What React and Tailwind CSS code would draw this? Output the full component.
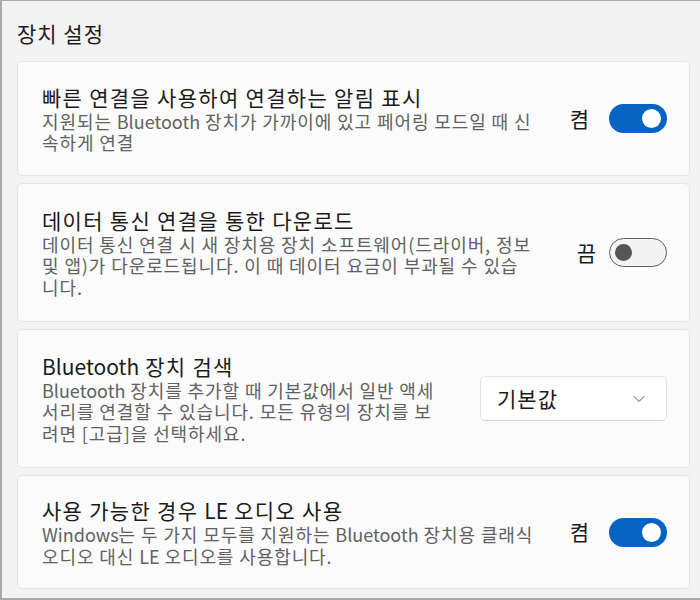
import { ChevronDown } from "lucide-react";

const font = { fontFamily: '"Noto Sans CJK KR", "Noto Sans", sans-serif' };

// Hangul in the reference runs wider than Latin, so only the Latin runs drop the tracking
const Spaced = ({ text }) =>
  text.split(/([A-Za-z]+)/).map((part, i) =>
    /^[A-Za-z]+$/.test(part) ? (
      <span key={i} className="tracking-normal">
        {part}
      </span>
    ) : (
      part
    )
  );

const Toggle = ({ on }) =>
  on ? (
    <div className="w-[58px] h-[29px] rounded-full bg-[#0563c1] flex items-center justify-end pr-[6px]">
      <div className="w-[19px] h-[19px] rounded-full bg-white" />
    </div>
  ) : (
    <div className="w-[58px] h-[29px] rounded-full border-[1.5px] border-[#5e5e5e] bg-[#f4f4f4] flex items-center pl-[5px]">
      <div className="w-[17px] h-[17px] rounded-full bg-[#555555]" />
    </div>
  );

const Card = ({ title, lines, height, children }) => (
  <div
    className={`${height} flex items-center justify-between bg-[#fbfbfb] border border-[#e5e5e5] rounded-[5px] pl-6 pr-[22px]`}
  >
    <div className="flex flex-col">
      <div className="text-[21px] leading-[27px] tracking-[1.3px] text-[#1b1b1b] whitespace-nowrap">
        <Spaced text={title} />
      </div>
      <div className="text-[18px] leading-[21.5px] tracking-[0.9px] text-[#616161]">
        {lines.map((l) => (
          <div key={l} className="whitespace-nowrap">
            <Spaced text={l} />
          </div>
        ))}
      </div>
    </div>
    {children}
  </div>
);

export default function App() {
  return (
    <div
      style={font}
      className="w-[700px] h-[600px] bg-[#f3f3f3] border-t border-l-2 border-b-2 border-[#a9a9a9] pl-[15px] pr-[10px] overflow-hidden"
    >
      <div className="text-[21px] leading-[28px] tracking-[1px] text-[#1b1b1b] pt-[18px] pb-[14px]">장치 설정</div>
      <div className="flex flex-col gap-[7px]">
        <Card
          height="h-[115px]"
          title="빠른 연결을 사용하여 연결하는 알림 표시"
          lines={["지원되는 Bluetooth 장치가 가까이에 있고 페어링 모드일 때 신", "속하게 연결"]}
        >
          <div className="flex items-center gap-[20px]">
            <span className="text-[21px] text-[#1b1b1b]">켬</span>
            <Toggle on />
          </div>
        </Card>
        <Card
          height="h-[139px]"
          title="데이터 통신 연결을 통한 다운로드"
          lines={[
            "데이터 통신 연결 시 새 장치용 장치 소프트웨어(드라이버, 정보",
            "및 앱)가 다운로드됩니다. 이 때 데이터 요금이 부과될 수 있습",
            "니다.",
          ]}
        >
          <div className="flex items-center gap-[13px]">
            <span className="text-[21px] text-[#1b1b1b]">끔</span>
            <Toggle on={false} />
          </div>
        </Card>
        <Card
          height="h-[139px]"
          title="Bluetooth 장치 검색"
          lines={[
            "Bluetooth 장치를 추가할 때 기본값에서 일반 액세",
            "서리를 연결할 수 있습니다. 모든 유형의 장치를 보",
            "려면 [고급]을 선택하세요.",
          ]}
        >
          <div className="w-[187px] h-[45px] bg-white border border-[#e3e3e3] border-b-[#d2d2d2] rounded-[5px] flex items-center justify-between pl-4 pr-[17px]">
            <span className="text-[21px] tracking-[1px] text-[#1b1b1b]">기본값</span>
            <ChevronDown className="w-5 h-5 text-[#5a5a5a]" strokeWidth={1.2} />
          </div>
        </Card>
        <Card
          height="h-[114px]"
          title="사용 가능한 경우 LE 오디오 사용"
          lines={["Windows는 두 가지 모두를 지원하는 Bluetooth 장치용 클래식", "오디오 대신 LE 오디오를 사용합니다."]}
        >
          <div className="flex items-center gap-[20px]">
            <span className="text-[21px] text-[#1b1b1b]">켬</span>
            <Toggle on />
          </div>
        </Card>
      </div>
    </div>
  );
}
